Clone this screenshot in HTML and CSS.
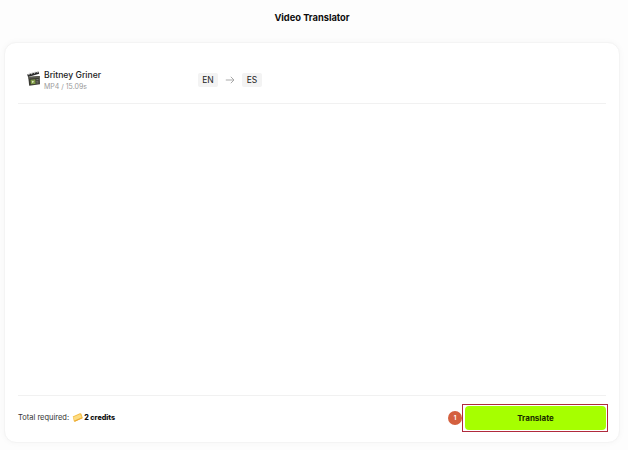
FILE: index.html
```html
<!DOCTYPE html>
<html lang="en">
<head>
<meta charset="utf-8">
<title>Video Translator</title>
<link rel="stylesheet" href="styles.css">
</head>
<body>
<div class="page">
  <h1 class="title">Video Translator</h1>
  <main class="card">
    <section class="item">
      <div class="file">
        <svg class="clapper" viewBox="0 0 16 16" width="15" height="15" aria-hidden="true">
          <path d="M2.200 6.400 1.200 3.600 13.200.4l.9 2.500z" fill="#2a2a2a"/>
          <path d="M2.800 4.200 4 1.800M5.800 3.400 7 1.100M8.800 2.600 10 .6M11.600 1.800 12.800 0" stroke="#d8d8d8" stroke-width="1.100"/>
          <path d="M2.400 6.400 14.600 5.400l.3 8.800-11.500 1.500z" fill="#3a3a32"/>
          <path d="M2.400 6.400 14.600 5.400l.1 1.800L2.600 8.200z" fill="#5a5a50"/>
          <path d="M4.800 9.200 10 8.800l.2 5-5 .4z" fill="#7f9a48"/>
          <path d="m6.500 10.300 2.300 1.100-2.200 1.500z" fill="#eef3cf"/>
          <path d="M11 9.200l2.400-.2M11 11l2.400-.2M11 12.800l2.400-.2" stroke="#92928a" stroke-width=".8"/>
        </svg>
        <div class="meta">
          <div class="name">Britney Griner</div>
          <div class="sub">MP4 / 15.09s</div>
        </div>
      </div>
      <div class="langs">
        <span class="lang">EN</span>
        <svg class="arrow" viewBox="0 0 10 10" width="10" height="10" aria-hidden="true">
          <path d="M.8 5h8.200M5.800 1.800 9 5 5.800 8.200" fill="none" stroke="#a9a9a9" stroke-width="1"/>
        </svg>
        <span class="lang">ES</span>
      </div>
    </section>
    <footer class="foot">
      <div class="total">
        <span>Total required:</span>
        <svg class="coin" viewBox="0 0 12 12" width="11" height="11" aria-hidden="true">
          <path d="M.8 5 8.600 1.400c.7-.3 1.300-.1 1.600.5l1.300 3.700c.2.500 0 1-.5 1.200l-7.400 3.500c-.7.300-1.300.1-1.600-.5z" fill="#f5bd45"/>
          <path d="M1.200 5.600 8.800 2.400l1.700 3.200-7.700 3.600z" fill="#fcdc82"/>
          <path d="M2 9.700 11.300 6l.2.800-7.900 3.600c-.7.200-1.200 0-1.600-.7z" fill="#eaa935"/>
        </svg>
        <strong class="credits">2 credits</strong>
      </div>
      <div class="action">
        <span class="badge">1</span>
        <div class="frame"><button class="translate" type="button">Translate</button></div>
      </div>
    </footer>
  </main>
</div>
</body>
</html>
```
FILE: styles.css
```css
* { box-sizing: border-box; }
html, body { margin: 0; height: 100%; }
body {
  background: #fdfdfd;
  color: #111;
  font-family: Inter, "Open Sans", "Liberation Sans", sans-serif;
}
.page {
  width: 628px;
  height: 450px;
  display: flex;
  flex-direction: column;
  padding: 0 8px 7px 4px;
}
.title {
  margin: 0;
  height: 42px;
  padding-top: 10px;
  font-size: 9.300px;
  line-height: 15px;
  font-weight: 700;
  text-align: center;
  color: #0c0c0c;
}
.card {
  flex: 1;
  display: flex;
  flex-direction: column;
  background: #fff;
  border: 1px solid #f4f4f4;
  border-radius: 12px;
  box-shadow: 0 0 6px rgba(0, 0, 0, .035);
  padding: 0 13px;
}
.item {
  height: 61px;
  border-bottom: 1px solid #f1f1f1;
  display: flex;
  align-items: center;
  padding: 14px 0 0 8px;
}
.file {
  width: 172px;
  display: flex;
  align-items: center;
  gap: 3px;
  padding-top: 1px;
}
.clapper { flex: none; margin-top: -4px; }
.name {
  font-size: 8.600px;
  line-height: 12px;
  font-weight: 500;
  color: #1b1b1b;
}
.sub {
  font-size: 7px;
  line-height: 11px;
  color: #9a9a9a;
}
.langs {
  display: flex;
  align-items: center;
  gap: 7px;
}
.lang {
  width: 20px;
  height: 14px;
  background: #f3f3f3;
  border-radius: 2px;
  font-size: 8.500px;
  line-height: 14px;
  text-align: center;
  color: #222;
}
.arrow { flex: none; }
.foot {
  margin-top: auto;
  height: 47px;
  border-top: 1px solid #f1f1f1;
  display: flex;
  align-items: center;
  justify-content: space-between;
  padding-bottom: 3px;
}
.total {
  display: flex;
  align-items: center;
  gap: 1px;
  font-size: 7.500px;
  color: #333;
}
.coin { flex: none; margin: 0 0 0 2px; }
.credits {
  font-size: 7.200px;
  font-weight: 800;
  color: #0d0d0d;
}
.action {
  position: relative;
  margin-right: -2px;
}
.frame {
  width: 146px;
  height: 28px;
  border: 1px solid #b02a3c;
  padding: 1px 1px 1px 2px;
  display: flex;
}
.translate {
  flex: 1;
  border: 0;
  border-radius: 4px;
  background: #a6ff00;
  font-family: inherit;
  font-size: 8px;
  font-weight: 700;
  color: #1b2b00;
  padding: 0;
}
.badge {
  position: absolute;
  left: -14px;
  top: 7px;
  width: 14px;
  height: 14px;
  border-radius: 50%;
  background: #d4603f;
  color: #fff;
  font-size: 6px;
  font-weight: 700;
  line-height: 14px;
  text-align: center;
}
```
